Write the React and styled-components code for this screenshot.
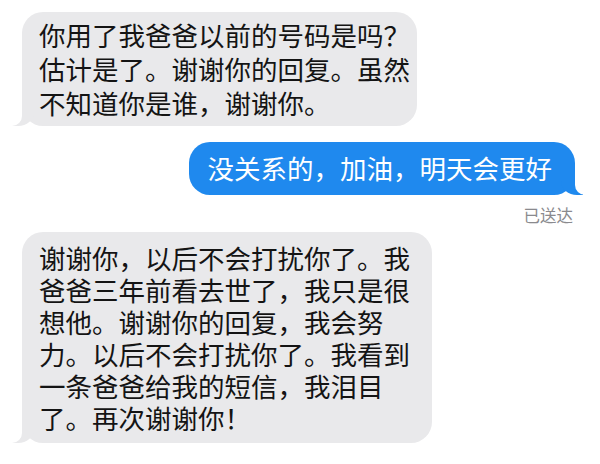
import React from "react";
import styled, { createGlobalStyle, css } from "styled-components";

const Global = createGlobalStyle`
  html, body { margin: 0; padding: 0; background: #ffffff; }
  body { font-family: "Noto Sans CJK SC", "Noto Sans", sans-serif; }
`;

const Thread = styled.div`
  width: 600px;
  height: 464px;
  box-sizing: border-box;
  padding: 12px 25px 0 22px;
  display: flex;
  flex-direction: column;
  overflow: hidden;
  background: #ffffff;
`;

const Bubble = styled.div`
  position: relative;
  box-sizing: border-box;
  max-width: ${(p) => p.$maxWidth}px;
  font-size: 26.5px;
  line-height: ${(p) => p.$lineHeight}px;
  padding: ${(p) => p.$pad};
  border-radius: 21px;
  word-break: normal;
  line-break: strict;

  &::before,
  &::after {
    content: "";
    position: absolute;
    bottom: 0;
  }

  ${(p) =>
    p.$sent
      ? css`
          align-self: flex-end;
          background: #1f89ee;
          color: #ffffff;
          &::before {
            right: -8px;
            width: 22px;
            height: 22px;
            background: #1f89ee;
            border-bottom-left-radius: 16px 14px;
          }
          &::after {
            right: -12px;
            width: 12px;
            height: 24px;
            background: #ffffff;
            border-bottom-left-radius: 10px;
          }
        `
      : css`
          align-self: flex-start;
          background: #e9e9eb;
          color: #141414;
          &::before {
            left: -10px;
            width: 22px;
            height: 22px;
            background: #e9e9eb;
            border-bottom-right-radius: 16px 14px;
          }
          &::after {
            left: -12px;
            width: 12px;
            height: 24px;
            background: #ffffff;
            border-bottom-right-radius: 10px;
          }
        `}
`;

const Status = styled.div`
  align-self: flex-end;
  margin: 10px 2px 7px 0;
  font-size: 16.5px;
  line-height: 20px;
  color: #8a8a8e;
`;

const Spacer = styled.div`
  height: ${(p) => p.$h}px;
  flex: none;
`;

export default function App() {
  return (
    <>
      <Global />
      <Thread>
        <Bubble $maxWidth={395} $lineHeight={34} $pad="6px 7px 6px 17px">
          你用了我爸爸以前的号码是吗？估计是了。谢谢你的回复。虽然不知道你是谁，谢谢你。
        </Bubble>
        <Spacer $h={16} />
        <Bubble $sent $maxWidth={400} $lineHeight={34} $pad="9px 23px 10px 19px">
          没关系的，加油，明天会更好
        </Bubble>
        <Status>已送达</Status>
        <Bubble $maxWidth={410} $lineHeight={32} $pad="10px 21px 9px 17px">
          谢谢你，以后不会打扰你了。我爸爸三年前看去世了，我只是很想他。谢谢你的回复，我会努力。以后不会打扰你了。我看到一条爸爸给我的短信，我泪目了。再次谢谢你！
        </Bubble>
      </Thread>
    </>
  );
}
